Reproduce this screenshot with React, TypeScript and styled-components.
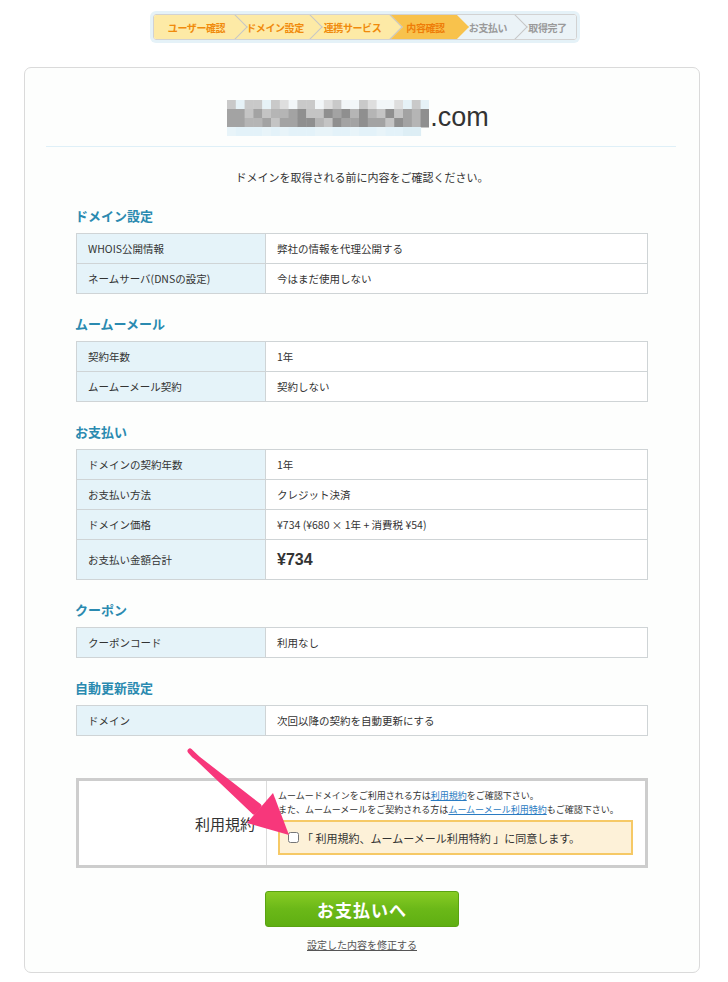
import React from "react";
import styled, { createGlobalStyle } from "styled-components";

const GlobalStyle = createGlobalStyle`
  body {
    margin: 0;
    background: #ffffff;
    font-family: "Noto Sans CJK JP", "Noto Sans", "Liberation Sans", sans-serif;
    color: #333;
  }
`;

type StepState = "done" | "active" | "todo";

const steps: { label: string; width: number; state: StepState }[] = [
  { label: "ユーザー確認", width: 82, state: "done" },
  { label: "ドメイン設定", width: 75, state: "done" },
  { label: "連携サービス", width: 80, state: "done" },
  { label: "内容確認", width: 66, state: "active" },
  { label: "お支払い", width: 59, state: "todo" },
  { label: "取得完了", width: 60, state: "todo" },
];

const stepBg: Record<StepState, string> = {
  done: "#fdeaa6",
  active: "#f8c24c",
  todo: "#ebf3f7",
};

const stepColor: Record<StepState, string> = {
  done: "#f08a0c",
  active: "#ee7d08",
  todo: "#9a9a9a",
};

const sections = [
  {
    title: "ドメイン設定",
    rows: [
      ["WHOIS公開情報", "弊社の情報を代理公開する"],
      ["ネームサーバ(DNSの設定)", "今はまだ使用しない"],
    ],
  },
  {
    title: "ムームーメール",
    rows: [
      ["契約年数", "1年"],
      ["ムームーメール契約", "契約しない"],
    ],
  },
  {
    title: "お支払い",
    rows: [
      ["ドメインの契約年数", "1年"],
      ["お支払い方法", "クレジット決済"],
      ["ドメイン価格", "¥734 (¥680 × 1年 + 消費税 ¥54)"],
      ["お支払い金額合計", "¥734"],
    ],
    totalLast: true,
  },
  {
    title: "クーポン",
    rows: [["クーポンコード", "利用なし"]],
  },
  {
    title: "自動更新設定",
    rows: [["ドメイン", "次回以降の契約を自動更新にする"]],
  },
];

// pixelated domain name
const mosaicCols = 23;
const cell = 8.8;
function mosaicColor(r: number, c: number) {
  const n = Math.abs(Math.sin(r * 91.7 + c * 37.3) * 1000) % 1;
  if (r === 0) {
    if (n < 0.35) return "#c9c9c9";
    if (n < 0.6) return "#dedede";
    return n < 0.8 ? "#e6f2f7" : "#f2f6f8";
  }
  if (r === 1 || r === 2) {
    if (n < 0.3) return "#8f8f8f";
    if (n < 0.6) return "#a3a3a3";
    if (n < 0.85) return "#b5b5b5";
    return "#c4c4c4";
  }
  if (c >= 20) return c === 22 ? "#e6e6e6" : "#ddeef5";
  return n < 0.5 ? "#e3f2f9" : "#e8f4f9";
}

function Mosaic() {
  const rects = [];
  for (let r = 0; r < 4; r++) {
    for (let c = 0; c < mosaicCols; c++) {
      if (r === 3 && c === 22) continue;
      rects.push(
        <rect
          key={`${r}-${c}`}
          x={c * cell}
          y={r * 9}
          width={cell + 0.5}
          height={9.5}
          fill={mosaicColor(r, c)}
        />
      );
    }
  }
  return (
    <svg width={202} height={36} viewBox="0 0 202 36">
      {rects}
    </svg>
  );
}

function PinkArrow() {
  return (
    <ArrowSvg width={728} height={982} viewBox="0 0 728 982">
      <path
        d="M190 751 L194 755.5 L259 806 L254 812 Z"
        fill="#f7377b"
        stroke="#f7377b"
        strokeWidth={5}
        strokeLinejoin="round"
        strokeLinecap="round"
      />
      <polygon points="289,835 247,823 273,793" fill="#f7377b" />
    </ArrowSvg>
  );
}

export default function App() {
  return (
    <Page>
      <GlobalStyle />
      <StepsWrap>
        <Steps>
          {steps.map((s, i) => (
            <Step key={s.label} $w={s.width} $state={s.state} $last={i === steps.length - 1}>
              <StepLabel>{s.label}</StepLabel>
            </Step>
          ))}
        </Steps>
      </StepsWrap>

      <Card>
        <DomainTitle>
          <Mosaic />
          <Tld>.com</Tld>
        </DomainTitle>
        <Divider />
        <Intro>ドメインを取得される前に内容をご確認ください。</Intro>

        {sections.map((sec) => (
          <Section key={sec.title}>
            <SectionTitle>{sec.title}</SectionTitle>
            <InfoTable>
              <tbody>
                {sec.rows.map(([label, value], i) => {
                  const total = sec.totalLast && i === sec.rows.length - 1;
                  return (
                    <Row key={label} $tall={!!total}>
                      <LabelCell>{label}</LabelCell>
                      <ValueCell $total={!!total}>{value}</ValueCell>
                    </Row>
                  );
                })}
              </tbody>
            </InfoTable>
          </Section>
        ))}

        <TermsTable>
          <tbody>
            <tr>
              <TermsLabel>利用規約</TermsLabel>
              <TermsBody>
                <Note>
                  ムームードメインをご利用される方は<a href="#">利用規約</a>をご確認下さい。
                </Note>
                <Note>
                  また、ムームーメールをご契約される方は<a href="#">ムームーメール利用特約</a>もご確認下さい。
                </Note>
                <AgreeBox>
                  <CheckBox type="checkbox" />
                  <span>「 利用規約、ムームーメール利用特約 」に同意します。</span>
                </AgreeBox>
              </TermsBody>
            </tr>
          </tbody>
        </TermsTable>

        <Actions>
          <PayButton>お支払いへ</PayButton>
          <EditLink href="#">設定した内容を修正する</EditLink>
        </Actions>
      </Card>
      <PinkArrow />
    </Page>
  );
}

const Page = styled.div`
  position: relative;
  width: 728px;
  min-height: 982px;
  padding-top: 14px;
  box-sizing: border-box;
`;

const StepsWrap = styled.div`
  display: flex;
  justify-content: center;
  padding-left: 1px;
`;

const Steps = styled.div`
  display: flex;
  height: 24px;
  border: 1px solid #d2d2d2;
  border-radius: 3px;
  overflow: hidden;
  box-shadow: 0 0 0 3px #e5f2f8;
`;

const Step = styled.div<{ $w: number; $state: StepState; $last: boolean }>`
  position: relative;
  width: ${(p) => p.$w}px;
  flex: none;
  display: flex;
  align-items: center;
  justify-content: center;
  padding: 0 4px 0 8px;
  box-sizing: border-box;
  background: ${(p) => stepBg[p.$state]};
  color: ${(p) => stepColor[p.$state]};
  font-size: 10px;
  font-weight: bold;
  white-space: nowrap;

  &::after {
    content: "";
    display: ${(p) => (p.$last ? "none" : "block")};
    position: absolute;
    top: 3px;
    right: -8px;
    width: 17px;
    height: 17px;
    background: ${(p) => stepBg[p.$state]};
    border-top: 1px solid ${(p) => (p.$state === "active" ? "#f8c24c" : "#c6c6c6")};
    border-right: 1px solid ${(p) => (p.$state === "active" ? "#f8c24c" : "#c6c6c6")};
    transform: rotate(45deg);
    z-index: 1;
  }
`;

const StepLabel = styled.span`
  position: relative;
  z-index: 2;
  letter-spacing: -0.4px;
`;

const Card = styled.div`
  margin: 27px 0 0 24px;
  width: 676px;
  box-sizing: border-box;
  border: 1px solid #dadada;
  border-radius: 7px;
  background: #fdfefd;
  padding: 32px 51px 20px 51px;
`;

const DomainTitle = styled.div`
  display: flex;
  justify-content: center;
  align-items: center;
  gap: 1px;
  padding-right: 8px;
`;

const Tld = styled.span`
  font-family: "Liberation Sans", Arial, sans-serif;
  font-size: 27px;
  color: #333;
  line-height: 36px;
  margin-top: -2px;
`;

const Divider = styled.div`
  height: 1px;
  background: #dff0f8;
  margin: 10px -28px 0 -30px;
`;

const Intro = styled.p`
  margin: 21px 0 21px;
  text-align: center;
  font-size: 11px;
  line-height: 18px;
  color: #333;
`;

const Section = styled.section`
  margin-bottom: 21px;
  &:last-of-type {
    margin-bottom: 42px;
  }
`;

const SectionTitle = styled.h3`
  margin: 0 0 8px -1px;
  font-size: 13px;
  line-height: 18px;
  font-weight: bold;
  color: #2a8ab0;
`;

const InfoTable = styled.table`
  width: 100%;
  border-collapse: collapse;
  font-size: 10.5px;
`;

const Row = styled.tr<{ $tall: boolean }>`
  height: ${(p) => (p.$tall ? 40 : 30)}px;
`;

const LabelCell = styled.td`
  width: 189px;
  box-sizing: border-box;
  padding: 0 0 0 11px;
  background: #e5f3f9;
  border: 1px solid #cfd4d6;
  color: #333;
`;

const ValueCell = styled.td<{ $total: boolean }>`
  padding: 0 0 0 11px;
  background: #ffffff;
  border: 1px solid #cfd4d6;
  color: #333;
  font-size: ${(p) => (p.$total ? "16px" : "10.5px")};
  font-weight: ${(p) => (p.$total ? "bold" : "normal")};
  font-family: ${(p) =>
    p.$total ? `"Liberation Sans", Arial, sans-serif` : "inherit"};
`;

const TermsTable = styled.table`
  width: 100%;
  border-collapse: collapse;
  border: 3px solid #cdcdcd;
  background: #ffffff;
`;

const TermsLabel = styled.td`
  width: 189px;
  height: 83px;
  box-sizing: border-box;
  text-align: right;
  padding: 0 11px 0 0;
  font-size: 15px;
  color: #333;
  border-right: 1px solid #dcdcdc;
`;

const TermsBody = styled.td`
  padding: 8px 12px 10px 11px;
  vertical-align: top;
`;

const Note = styled.div`
  font-size: 9px;
  line-height: 14px;
  color: #333;

  a {
    color: #2a7bc2;
    text-decoration: underline;
  }
`;

const AgreeBox = styled.label`
  display: flex;
  align-items: center;
  gap: 3px;
  margin-top: 3px;
  height: 35px;
  box-sizing: border-box;
  padding: 0 8px;
  background: #fdf1d8;
  border: 2px solid #f6c966;
  font-size: 11px;
  color: #333;
`;

const CheckBox = styled.input`
  width: 11px;
  height: 11px;
  margin: 0;
`;

const Actions = styled.div`
  display: flex;
  flex-direction: column;
  align-items: center;
  gap: 10px;
  margin-top: 23px;
`;

const PayButton = styled.button`
  width: 194px;
  height: 36px;
  border: 1px solid #5aa312;
  border-radius: 3px;
  background: linear-gradient(#88cc24, #6bb818 50%, #5faf12);
  color: #ffffff;
  font-family: inherit;
  font-size: 17px;
  font-weight: bold;
  letter-spacing: 1px;
  cursor: pointer;
`;

const EditLink = styled.a`
  font-size: 10px;
  color: #555;
  text-decoration: underline;
`;

const ArrowSvg = styled.svg`
  position: absolute;
  left: 0;
  top: 0;
  pointer-events: none;
`;
